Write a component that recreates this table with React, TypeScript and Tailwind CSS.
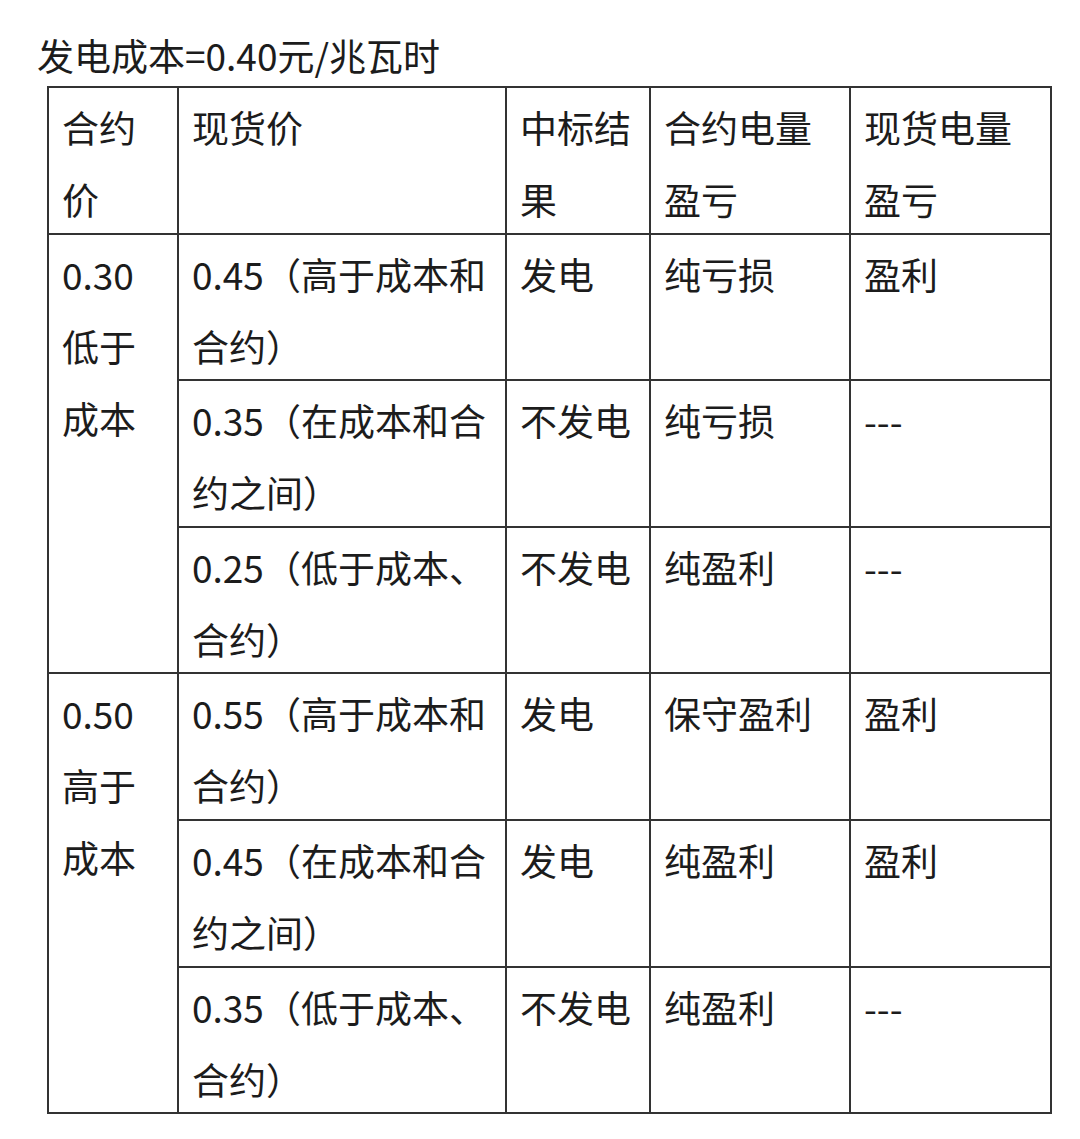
const font = { fontFamily: '"Noto Sans CJK SC", "Noto Sans", sans-serif' };

type Cell = { lines: string[]; rowSpan?: number };

const header: string[][] = [
  ["合约", "价"],
  ["现货价"],
  ["中标结", "果"],
  ["合约电量", "盈亏"],
  ["现货电量", "盈亏"],
];

const rows: Cell[][] = [
  [
    { lines: ["0.30", "低于", "成本"], rowSpan: 3 },
    { lines: ["0.45（高于成本和", "合约）"] },
    { lines: ["发电"] },
    { lines: ["纯亏损"] },
    { lines: ["盈利"] },
  ],
  [
    { lines: ["0.35（在成本和合", "约之间）"] },
    { lines: ["不发电"] },
    { lines: ["纯亏损"] },
    { lines: ["---"] },
  ],
  [
    { lines: ["0.25（低于成本、", "合约）"] },
    { lines: ["不发电"] },
    { lines: ["纯盈利"] },
    { lines: ["---"] },
  ],
  [
    { lines: ["0.50", "高于", "成本"], rowSpan: 3 },
    { lines: ["0.55（高于成本和", "合约）"] },
    { lines: ["发电"] },
    { lines: ["保守盈利"] },
    { lines: ["盈利"] },
  ],
  [
    { lines: ["0.45（在成本和合", "约之间）"] },
    { lines: ["发电"] },
    { lines: ["纯盈利"] },
    { lines: ["盈利"] },
  ],
  [
    { lines: ["0.35（低于成本、", "合约）"] },
    { lines: ["不发电"] },
    { lines: ["纯盈利"] },
    { lines: ["---"] },
  ],
];

const cellCls =
  "border-2 border-[#333333] align-top text-left font-normal pl-[13px] pr-0 py-0 whitespace-nowrap";

// fixed-height box so the row pitch stays at ~146.6px; extra lines overflow (rowspan cells)
function Lines({ lines }: { lines: string[] }) {
  return (
    <div className="h-[144.6px] pt-[3px] overflow-visible">
      {lines.map((l, i) => (
        <div key={i}>{l}</div>
      ))}
    </div>
  );
}

export default function App() {
  return (
    <div className="w-[1080px] h-[1139px] bg-white text-[#1c1c1c] overflow-hidden" style={font}>
      <div className="pl-[37px] pt-[33px] text-[37px] leading-[44px]">发电成本=0.40元/兆瓦时</div>

      <table className="ml-[47px] mt-[9px] table-fixed border-collapse w-[1004px] text-[37px] leading-[72px]">
        <colgroup>
          <col className="w-[130px]" />
          <col className="w-[328px]" />
          <col className="w-[144px]" />
          <col className="w-[200px]" />
          <col className="w-[201px]" />
        </colgroup>
        <thead>
          <tr>
            {header.map((h, i) => (
              <th key={i} className={cellCls}>
                <Lines lines={h} />
              </th>
            ))}
          </tr>
        </thead>
        <tbody>
          {rows.map((r, ri) => (
            <tr key={ri}>
              {r.map((c, ci) => (
                <td key={ci} rowSpan={c.rowSpan} className={cellCls}>
                  <Lines lines={c.lines} />
                </td>
              ))}
            </tr>
          ))}
        </tbody>
      </table>
    </div>
  );
}
